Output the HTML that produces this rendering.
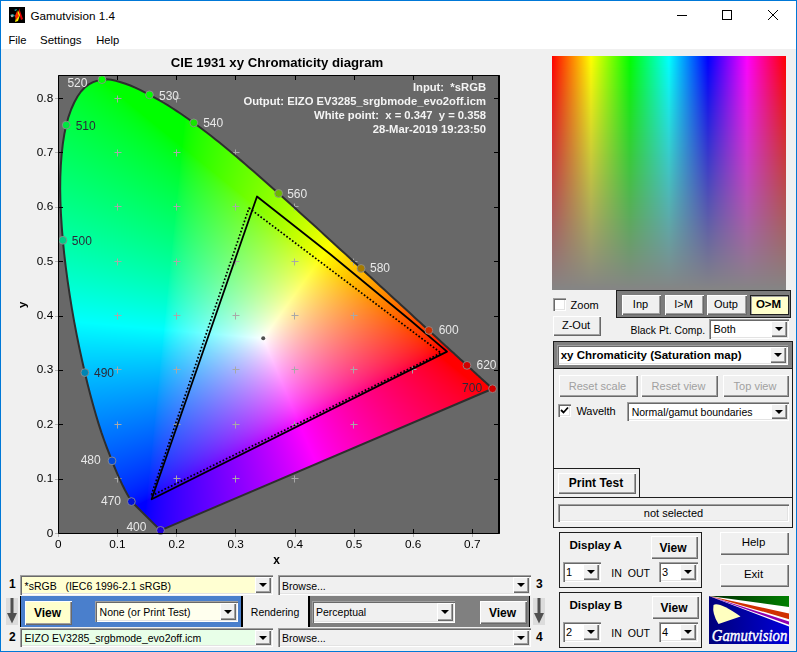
<!DOCTYPE html>
<html><head><meta charset="utf-8"><style>
html,body{margin:0;padding:0;}
body{width:797px;height:652px;overflow:hidden;background:#F0F0F0;position:relative;font-family:"Liberation Sans", sans-serif;}
div,svg,canvas{position:absolute;}
.t{white-space:pre;}
</style></head><body>
<div style="left:0px;top:0px;width:797px;height:49px;background:#fff;"></div>
<svg style="position:absolute;left:9px;top:7px" width="16" height="16" viewBox="0 0 16 16">
<rect width="16" height="16" fill="#000"/>
<path d="M10 1 L14 12 L12 13 L10 6 Z" fill="#e00000"/>
<path d="M9 3 L11 8 L9 14 L6 15 L7 11 Z" fill="#ffee00"/>
<path d="M8 4 L10 9 L7 13 L6 9 Z" fill="#ff2a00"/>
<path d="M5 3 L8 2 L7 4 Z" fill="#20c0c0"/>
<path d="M1 8 L4 7 L6 9 L3 10 Z" fill="#20a0a0"/>
<circle cx="3" cy="9" r="1.2" fill="#aaa"/>
</svg>
<div class="t" style="left:30.5px;top:9.50px;font-size:11.7px;line-height:11.7px;font-weight:normal;color:#000;">Gamutvision 1.4</div>
<div style="left:677px;top:15px;width:10px;height:1px;background:#000;"></div>
<div style="left:722px;top:10px;width:10px;height:10px;border:1px solid #000;box-sizing:border-box;"></div>
<svg style="position:absolute;left:767px;top:9px" width="12" height="12" viewBox="0 0 12 12"><path d="M1 1 L11 11 M11 1 L1 11" stroke="#000" stroke-width="1"/></svg>
<div class="t" style="left:8.5px;top:35.12px;font-size:11.2px;line-height:11.2px;font-weight:normal;color:#000;">File</div>
<div class="t" style="left:40px;top:34.87px;font-size:11.5px;line-height:11.5px;font-weight:normal;color:#000;">Settings</div>
<div class="t" style="left:96.2px;top:35.12px;font-size:11.2px;line-height:11.2px;font-weight:normal;color:#000;">Help</div>
<canvas id="plot" width="545" height="575" style="left:0;top:0;"></canvas>
<canvas id="cmap" width="234" height="234" style="left:552px;top:56px;"></canvas>
<script>(function(){const c=document.getElementById('cmap').getContext('2d');const im=c.createImageData(234,234);const d=im.data;
for(let j=0;j<234;j++){for(let i=0;i<234;i++){const h=(i+0.5)/234*6;const t=(j+0.5)/234;
 const k=Math.floor(h)%6,f=h-Math.floor(h);let r,g,b;
 switch(k){case 0:r=1;g=f;b=0;break;case 1:r=1-f;g=1;b=0;break;case 2:r=0;g=1;b=f;break;case 3:r=0;g=1-f;b=1;break;case 4:r=f;g=0;b=1;break;default:r=1;g=0;b=1-f;}
 const gr=0.52;const s=1-t;
 const o=(j*234+i)*4;d[o]=(gr+(r-gr)*s)*255;d[o+1]=(gr+(g-gr)*s)*255;d[o+2]=(gr+(b-gr)*s)*255;d[o+3]=255;}}
c.putImageData(im,0,0);})();</script>
<div style="left:553px;top:298px;width:13px;height:13px;background:#fff;box-shadow:inset 1px 1px 0 #a0a0a0, inset 2px 2px 0 #696969, inset -1px -1px 0 #fff, inset -2px -2px 0 #e3e3e3;"></div>
<div class="t" style="left:570.6px;top:299.79px;font-size:11px;line-height:11px;font-weight:normal;color:#000;">Zoom</div>
<div style="left:553px;top:316px;width:48px;height:20px;background:#F0F0F0;box-shadow:inset 1px 1px 0 #fff, inset -1px -1px 0 #696969, inset -2px -2px 0 #a0a0a0;"></div>
<div class="t" style="left:552.0px;width:48px;text-align:center;top:320.39px;font-size:11px;line-height:11px;font-weight:normal;color:#000;">Z-Out</div>
<div style="left:616px;top:290px;width:175px;height:28px;background:#7c7c7c;border:1px solid #1e1e1e;box-sizing:border-box;"></div>
<div style="left:622px;top:295px;width:39px;height:20px;background:#F0F0F0;box-shadow:inset 1px 1px 0 #fff, inset -1px -1px 0 #696969, inset -2px -2px 0 #a0a0a0;"></div>
<div class="t" style="left:621.0px;width:39px;text-align:center;top:299.49px;font-size:11px;line-height:11px;font-weight:normal;color:#000;">Inp</div>
<div style="left:665px;top:295px;width:39px;height:20px;background:#F0F0F0;box-shadow:inset 1px 1px 0 #fff, inset -1px -1px 0 #696969, inset -2px -2px 0 #a0a0a0;"></div>
<div class="t" style="left:664.0px;width:39px;text-align:center;top:299.49px;font-size:11px;line-height:11px;font-weight:normal;color:#000;">I&gt;M</div>
<div style="left:707px;top:295px;width:40px;height:20px;background:#F0F0F0;box-shadow:inset 1px 1px 0 #fff, inset -1px -1px 0 #696969, inset -2px -2px 0 #a0a0a0;"></div>
<div class="t" style="left:706.0px;width:40px;text-align:center;top:299.49px;font-size:11px;line-height:11px;font-weight:normal;color:#000;">Outp</div>
<div style="left:750px;top:295px;width:39px;height:20px;background:#FFFFCC;border:1px solid #202020;box-sizing:border-box;box-shadow:inset 1px 1px 0 #a0a0a0;"></div>
<div class="t" style="left:749.0px;width:39px;text-align:center;top:299.07px;font-size:11.5px;line-height:11.5px;font-weight:bold;color:#000;">O&gt;M</div>
<div class="t" style="left:630.6px;top:325.50px;font-size:10.4px;line-height:10.4px;font-weight:normal;color:#000;">Black Pt. Comp.</div>
<div style="left:709px;top:319px;width:80px;height:20px;background:#fff;box-shadow:inset 1px 1px 0 #a0a0a0, inset 2px 2px 0 #696969, inset -1px -1px 0 #fff, inset -2px -2px 0 #e3e3e3;"></div>
<div style="left:771px;top:321px;width:16px;height:16px;background:#F0F0F0;box-shadow:inset 1px 1px 0 #fff, inset -1px -1px 0 #696969, inset -2px -2px 0 #a0a0a0;"></div>
<div style="left:775.0px;top:327.0px;width:0;height:0;border-left:4px solid transparent;border-right:4px solid transparent;border-top:4px solid #000;"></div>
<div class="t" style="left:713.5px;top:324.46px;font-size:10.8px;line-height:10.8px;font-weight:normal;color:#000;">Both</div>
<div style="left:553px;top:341px;width:240px;height:28px;background:#808080;border:1px solid #1e1e1e;box-sizing:border-box;"></div>
<div style="left:557px;top:345px;width:231px;height:20px;background:#fff;box-shadow:inset 1px 1px 0 #a0a0a0, inset 2px 2px 0 #696969, inset -1px -1px 0 #fff, inset -2px -2px 0 #e3e3e3;"></div>
<div style="left:770px;top:347px;width:16px;height:16px;background:#F0F0F0;box-shadow:inset 1px 1px 0 #fff, inset -1px -1px 0 #696969, inset -2px -2px 0 #a0a0a0;"></div>
<div style="left:774.0px;top:353.0px;width:0;height:0;border-left:4px solid transparent;border-right:4px solid transparent;border-top:4px solid #000;"></div>
<div class="t" style="left:560.7px;top:350.07px;font-size:11.5px;line-height:11.5px;font-weight:bold;color:#000;">xy Chromaticity (Saturation map)</div>
<div style="left:553px;top:368px;width:240px;height:160px;border:1px solid #1e1e1e;box-sizing:border-box;"></div>
<div style="left:559px;top:375px;width:79px;height:22px;background:#F0F0F0;box-shadow:inset 1px 1px 0 #fff, inset -1px -1px 0 #696969, inset -2px -2px 0 #a0a0a0;"></div>
<div class="t" style="left:558.0px;width:79px;text-align:center;top:380.69px;font-size:11px;line-height:11px;font-weight:normal;color:#a0a0a0;">Reset scale</div>
<div style="left:641px;top:375px;width:77px;height:22px;background:#F0F0F0;box-shadow:inset 1px 1px 0 #fff, inset -1px -1px 0 #696969, inset -2px -2px 0 #a0a0a0;"></div>
<div class="t" style="left:640.0px;width:77px;text-align:center;top:380.69px;font-size:11px;line-height:11px;font-weight:normal;color:#a0a0a0;">Reset view</div>
<div style="left:723px;top:375px;width:66px;height:22px;background:#F0F0F0;box-shadow:inset 1px 1px 0 #fff, inset -1px -1px 0 #696969, inset -2px -2px 0 #a0a0a0;"></div>
<div class="t" style="left:722.0px;width:66px;text-align:center;top:380.69px;font-size:11px;line-height:11px;font-weight:normal;color:#a0a0a0;">Top view</div>
<div style="left:558px;top:404px;width:13px;height:13px;background:#fff;box-shadow:inset 1px 1px 0 #a0a0a0, inset 2px 2px 0 #696969, inset -1px -1px 0 #fff, inset -2px -2px 0 #e3e3e3;"></div>
<svg style="position:absolute;left:560px;top:406px" width="9" height="9" viewBox="0 0 9 9"><path d="M1 4 L3.5 6.5 L8 1.5" stroke="#000" stroke-width="1.8" fill="none"/></svg>
<div class="t" style="left:576.4px;top:405.69px;font-size:11px;line-height:11px;font-weight:normal;color:#000;">Wavelth</div>
<div style="left:627px;top:402px;width:162px;height:19px;background:#fff;box-shadow:inset 1px 1px 0 #a0a0a0, inset 2px 2px 0 #696969, inset -1px -1px 0 #fff, inset -2px -2px 0 #e3e3e3;"></div>
<div style="left:771px;top:404px;width:16px;height:15px;background:#F0F0F0;box-shadow:inset 1px 1px 0 #fff, inset -1px -1px 0 #696969, inset -2px -2px 0 #a0a0a0;"></div>
<div style="left:775.0px;top:409.5px;width:0;height:0;border-left:4px solid transparent;border-right:4px solid transparent;border-top:4px solid #000;"></div>
<div class="t" style="left:631.7px;top:407.11px;font-size:10.5px;line-height:10.5px;font-weight:normal;color:#000;">Normal/gamut boundaries</div>
<div style="left:553px;top:468px;width:87px;height:30px;border:1px solid #1e1e1e;border-bottom:none;box-sizing:border-box;"></div>
<div style="left:553px;top:497px;width:240px;height:1px;background:#1e1e1e;"></div>
<div style="left:558px;top:473px;width:78px;height:21px;background:#F0F0F0;box-shadow:inset 1px 1px 0 #fff, inset -1px -1px 0 #696969, inset -2px -2px 0 #a0a0a0;"></div>
<div class="t" style="left:557.0px;width:78px;text-align:center;top:477.44px;font-size:12px;line-height:12px;font-weight:bold;color:#000;">Print Test</div>
<div style="left:558px;top:504px;width:231px;height:18px;background:#F0F0F0;box-shadow:inset 1px 1px 0 #a0a0a0, inset 2px 2px 0 #696969, inset -1px -1px 0 #fff, inset -2px -2px 0 #e3e3e3;"></div>
<div class="t" style="left:573.5px;width:200px;text-align:center;top:508.19px;font-size:11px;line-height:11px;font-weight:normal;color:#000;">not selected</div>
<div style="left:559px;top:532px;width:143px;height:56px;border:1px solid #1e1e1e;box-sizing:border-box;"></div>
<div class="t" style="left:569.5px;top:539.18px;font-size:11.6px;line-height:11.6px;font-weight:bold;color:#000;">Display A</div>
<div style="left:650.5px;top:536px;width:47px;height:23px;background:#F0F0F0;box-shadow:inset 1px 1px 0 #fff, inset -1px -1px 0 #696969, inset -2px -2px 0 #a0a0a0;"></div>
<div class="t" style="left:649.5px;width:47px;text-align:center;top:541.84px;font-size:12px;line-height:12px;font-weight:bold;color:#000;">View</div>
<div style="left:563px;top:562px;width:38px;height:20px;background:#fff;box-shadow:inset 1px 1px 0 #a0a0a0, inset 2px 2px 0 #696969, inset -1px -1px 0 #fff, inset -2px -2px 0 #e3e3e3;"></div>
<div style="left:583px;top:564px;width:16px;height:16px;background:#F0F0F0;box-shadow:inset 1px 1px 0 #fff, inset -1px -1px 0 #696969, inset -2px -2px 0 #a0a0a0;"></div>
<div style="left:587.0px;top:570.0px;width:0;height:0;border-left:4px solid transparent;border-right:4px solid transparent;border-top:4px solid #000;"></div>
<div class="t" style="left:566px;top:567.29px;font-size:11px;line-height:11px;font-weight:normal;color:#000;">1</div>
<div class="t" style="left:611.2px;top:567.53px;font-size:10.6px;line-height:10.6px;font-weight:normal;color:#000;">IN  OUT</div>
<div style="left:659px;top:562px;width:39px;height:20px;background:#fff;box-shadow:inset 1px 1px 0 #a0a0a0, inset 2px 2px 0 #696969, inset -1px -1px 0 #fff, inset -2px -2px 0 #e3e3e3;"></div>
<div style="left:680px;top:564px;width:16px;height:16px;background:#F0F0F0;box-shadow:inset 1px 1px 0 #fff, inset -1px -1px 0 #696969, inset -2px -2px 0 #a0a0a0;"></div>
<div style="left:684.0px;top:570.0px;width:0;height:0;border-left:4px solid transparent;border-right:4px solid transparent;border-top:4px solid #000;"></div>
<div class="t" style="left:662px;top:567.29px;font-size:11px;line-height:11px;font-weight:normal;color:#000;">3</div>
<div style="left:559px;top:592px;width:143px;height:56px;border:1px solid #1e1e1e;box-sizing:border-box;"></div>
<div class="t" style="left:569.5px;top:599.18px;font-size:11.6px;line-height:11.6px;font-weight:bold;color:#000;">Display B</div>
<div style="left:651.5px;top:596px;width:47px;height:23px;background:#F0F0F0;box-shadow:inset 1px 1px 0 #fff, inset -1px -1px 0 #696969, inset -2px -2px 0 #a0a0a0;"></div>
<div class="t" style="left:650.5px;width:47px;text-align:center;top:601.84px;font-size:12px;line-height:12px;font-weight:bold;color:#000;">View</div>
<div style="left:563px;top:622px;width:38px;height:20px;background:#fff;box-shadow:inset 1px 1px 0 #a0a0a0, inset 2px 2px 0 #696969, inset -1px -1px 0 #fff, inset -2px -2px 0 #e3e3e3;"></div>
<div style="left:583px;top:624px;width:16px;height:16px;background:#F0F0F0;box-shadow:inset 1px 1px 0 #fff, inset -1px -1px 0 #696969, inset -2px -2px 0 #a0a0a0;"></div>
<div style="left:587.0px;top:630.0px;width:0;height:0;border-left:4px solid transparent;border-right:4px solid transparent;border-top:4px solid #000;"></div>
<div class="t" style="left:566px;top:627.29px;font-size:11px;line-height:11px;font-weight:normal;color:#000;">2</div>
<div class="t" style="left:611.2px;top:627.53px;font-size:10.6px;line-height:10.6px;font-weight:normal;color:#000;">IN  OUT</div>
<div style="left:659px;top:622px;width:39px;height:20px;background:#fff;box-shadow:inset 1px 1px 0 #a0a0a0, inset 2px 2px 0 #696969, inset -1px -1px 0 #fff, inset -2px -2px 0 #e3e3e3;"></div>
<div style="left:680px;top:624px;width:16px;height:16px;background:#F0F0F0;box-shadow:inset 1px 1px 0 #fff, inset -1px -1px 0 #696969, inset -2px -2px 0 #a0a0a0;"></div>
<div style="left:684.0px;top:630.0px;width:0;height:0;border-left:4px solid transparent;border-right:4px solid transparent;border-top:4px solid #000;"></div>
<div class="t" style="left:662px;top:627.29px;font-size:11px;line-height:11px;font-weight:normal;color:#000;">4</div>
<div style="left:720px;top:532px;width:69px;height:23px;background:#F0F0F0;box-shadow:inset 1px 1px 0 #fff, inset -1px -1px 0 #696969, inset -2px -2px 0 #a0a0a0;"></div>
<div class="t" style="left:719.0px;width:69px;text-align:center;top:537.07px;font-size:11.5px;line-height:11.5px;font-weight:normal;color:#000;">Help</div>
<div style="left:720px;top:564px;width:69px;height:23px;background:#F0F0F0;box-shadow:inset 1px 1px 0 #fff, inset -1px -1px 0 #696969, inset -2px -2px 0 #a0a0a0;"></div>
<div class="t" style="left:719.0px;width:69px;text-align:center;top:569.27px;font-size:11.5px;line-height:11.5px;font-weight:normal;color:#000;">Exit</div>
<svg style="position:absolute;left:709px;top:596px" width="80" height="48" viewBox="0 0 80 48">
<defs><linearGradient id="lb" x1="0" x2="1"><stop offset="0" stop-color="#00007a"/><stop offset="1" stop-color="#0000d8"/></linearGradient>
<linearGradient id="lg" x1="0" x2="1"><stop offset="0" stop-color="#002800"/><stop offset="1" stop-color="#008000"/></linearGradient></defs>
<rect width="80" height="48" fill="url(#lb)"/>
<path d="M0 0 L80 0 L80 30.5 Z" fill="#fff"/>
<path d="M0 0 L80 0 L80 11 Z" fill="url(#lg)"/>
<path d="M0 0 L80 17.5 L80 23.2 Z" fill="#d03000"/>
<path d="M0 0 L80 25.4 L80 28.7 Z" fill="#9000b0"/>
<path d="M4.5 9 Q10 5.5 31.5 20.5 L9.5 28 Q3 18 4.5 9 Z" fill="#ffffc0"/>
<text x="2.8" y="44.6" font-family="Liberation Serif" font-style="italic" font-size="17.5" fill="#fff" stroke="#fff" stroke-width="0.45" textLength="75.5" lengthAdjust="spacingAndGlyphs">Gamutvision</text>
</svg>
<div class="t" style="left:9px;top:578.44px;font-size:12px;line-height:12px;font-weight:bold;color:#000;">1</div>
<div class="t" style="left:9px;top:630.94px;font-size:12px;line-height:12px;font-weight:bold;color:#000;">2</div>
<div style="left:20px;top:575px;width:253px;height:20px;background:#FFFFD2;box-shadow:inset 1px 1px 0 #a0a0a0, inset 2px 2px 0 #696969, inset -1px -1px 0 #fff, inset -2px -2px 0 #e3e3e3;"></div>
<div style="left:255px;top:577px;width:16px;height:16px;background:#F0F0F0;box-shadow:inset 1px 1px 0 #fff, inset -1px -1px 0 #696969, inset -2px -2px 0 #a0a0a0;"></div>
<div style="left:259.0px;top:583.0px;width:0;height:0;border-left:4px solid transparent;border-right:4px solid transparent;border-top:4px solid #000;"></div>
<div class="t" style="left:24.6px;top:580.61px;font-size:10.5px;line-height:10.5px;font-weight:normal;color:#000;">*sRGB   (IEC6 1996-2.1 sRGB)</div>
<div style="left:20px;top:628px;width:253px;height:19px;background:#E8FFE8;box-shadow:inset 1px 1px 0 #a0a0a0, inset 2px 2px 0 #696969, inset -1px -1px 0 #fff, inset -2px -2px 0 #e3e3e3;"></div>
<div style="left:255px;top:630px;width:16px;height:15px;background:#F0F0F0;box-shadow:inset 1px 1px 0 #fff, inset -1px -1px 0 #696969, inset -2px -2px 0 #a0a0a0;"></div>
<div style="left:259.0px;top:635.5px;width:0;height:0;border-left:4px solid transparent;border-right:4px solid transparent;border-top:4px solid #000;"></div>
<div class="t" style="left:24.6px;top:633.41px;font-size:10.5px;line-height:10.5px;font-weight:normal;color:#000;">EIZO EV3285_srgbmode_evo2off.icm</div>
<div style="left:278px;top:575px;width:253px;height:20px;background:#F0F0F0;box-shadow:inset 1px 1px 0 #a0a0a0, inset 2px 2px 0 #696969, inset -1px -1px 0 #fff, inset -2px -2px 0 #e3e3e3;"></div>
<div style="left:513px;top:577px;width:16px;height:16px;background:#F0F0F0;box-shadow:inset 1px 1px 0 #fff, inset -1px -1px 0 #696969, inset -2px -2px 0 #a0a0a0;"></div>
<div style="left:517.0px;top:583.0px;width:0;height:0;border-left:4px solid transparent;border-right:4px solid transparent;border-top:4px solid #000;"></div>
<div class="t" style="left:282px;top:580.61px;font-size:10.5px;line-height:10.5px;font-weight:normal;color:#000;">Browse...</div>
<div style="left:278px;top:628px;width:253px;height:19px;background:#F0F0F0;box-shadow:inset 1px 1px 0 #a0a0a0, inset 2px 2px 0 #696969, inset -1px -1px 0 #fff, inset -2px -2px 0 #e3e3e3;"></div>
<div style="left:513px;top:630px;width:16px;height:15px;background:#F0F0F0;box-shadow:inset 1px 1px 0 #fff, inset -1px -1px 0 #696969, inset -2px -2px 0 #a0a0a0;"></div>
<div style="left:517.0px;top:635.5px;width:0;height:0;border-left:4px solid transparent;border-right:4px solid transparent;border-top:4px solid #000;"></div>
<div class="t" style="left:282px;top:633.41px;font-size:10.5px;line-height:10.5px;font-weight:normal;color:#000;">Browse...</div>
<div class="t" style="left:536px;top:578.24px;font-size:12px;line-height:12px;font-weight:bold;color:#000;">3</div>
<div class="t" style="left:536px;top:630.94px;font-size:12px;line-height:12px;font-weight:bold;color:#000;">4</div>
<div style="left:20px;top:596px;width:223px;height:31px;background:#4a7fcc;border-left:1px solid #000;border-right:2px solid #000;box-sizing:border-box;"></div>
<div style="left:25px;top:601px;width:47px;height:24px;background:#FFFFCC;box-shadow:inset 1px 1px 0 #fff, inset -1px -1px 0 #696969, inset -2px -2px 0 #a0a0a0;"></div>
<div class="t" style="left:24.0px;width:47px;text-align:center;top:607.34px;font-size:12px;line-height:12px;font-weight:bold;color:#000;">View</div>
<div style="left:95px;top:601px;width:143px;height:21px;background:#FFFFEE;box-shadow:inset 1px 1px 0 #a0a0a0, inset 2px 2px 0 #696969, inset -1px -1px 0 #fff, inset -2px -2px 0 #e3e3e3;"></div>
<div style="left:220px;top:603px;width:16px;height:17px;background:#F0F0F0;box-shadow:inset 1px 1px 0 #fff, inset -1px -1px 0 #696969, inset -2px -2px 0 #a0a0a0;"></div>
<div style="left:224.0px;top:609.5px;width:0;height:0;border-left:4px solid transparent;border-right:4px solid transparent;border-top:4px solid #000;"></div>
<div class="t" style="left:99.6px;top:606.91px;font-size:10.5px;line-height:10.5px;font-weight:normal;color:#000;">None (or Print Test)</div>
<div class="t" style="left:250.8px;top:607.01px;font-size:10.5px;line-height:10.5px;font-weight:normal;color:#000;">Rendering</div>
<div style="left:308px;top:596px;width:222px;height:31px;background:#808080;border-left:2px solid #000;border-right:1px solid #000;box-sizing:border-box;"></div>
<div style="left:312px;top:601px;width:143px;height:22px;background:#F0F0F0;box-shadow:inset 1px 1px 0 #a0a0a0, inset 2px 2px 0 #696969, inset -1px -1px 0 #fff, inset -2px -2px 0 #e3e3e3;"></div>
<div style="left:437px;top:603px;width:16px;height:18px;background:#F0F0F0;box-shadow:inset 1px 1px 0 #fff, inset -1px -1px 0 #696969, inset -2px -2px 0 #a0a0a0;"></div>
<div style="left:441.0px;top:610.0px;width:0;height:0;border-left:4px solid transparent;border-right:4px solid transparent;border-top:4px solid #000;"></div>
<div class="t" style="left:316px;top:607.11px;font-size:10.5px;line-height:10.5px;font-weight:normal;color:#000;">Perceptual</div>
<div style="left:480px;top:601px;width:47px;height:23px;background:#F0F0F0;box-shadow:inset 1px 1px 0 #fff, inset -1px -1px 0 #696969, inset -2px -2px 0 #a0a0a0;"></div>
<div class="t" style="left:479.0px;width:47px;text-align:center;top:606.84px;font-size:12px;line-height:12px;font-weight:bold;color:#000;">View</div>
<div style="left:6px;top:598px;width:12px;height:27px;background:#dcdcdc;"></div>
<svg style="position:absolute;left:6px;top:598px" width="12" height="27" viewBox="0 0 12 27"><path d="M6 0 V20" stroke="#505050" stroke-width="3"/><path d="M1 15 L6 25.5 L11 15 Z" fill="#505050"/></svg>
<div style="left:533px;top:598px;width:12px;height:27px;background:#dcdcdc;"></div>
<svg style="position:absolute;left:533px;top:598px" width="12" height="27" viewBox="0 0 12 27"><path d="M6 0 V20" stroke="#505050" stroke-width="3"/><path d="M1 15 L6 25.5 L11 15 Z" fill="#505050"/></svg>
<div style="left:0px;top:0px;width:797px;height:652px;box-sizing:border-box;border:1px solid #0078d7;"></div>
<script>
(function(){
const cv=document.getElementById('plot');
const ctx=cv.getContext('2d');
const X0=58, Y0=533, SX=591.43, SY=543.75;
const L=[[380,0.1741,0.0050],[385,0.1740,0.0050],[390,0.1738,0.0049],[395,0.1736,0.0049],[400,0.1733,0.0048],[405,0.1730,0.0048],[410,0.1726,0.0048],[415,0.1721,0.0048],[420,0.1714,0.0051],[425,0.1703,0.0058],[430,0.1689,0.0069],[435,0.1669,0.0086],[440,0.1644,0.0109],[445,0.1611,0.0138],[450,0.1566,0.0177],[455,0.1510,0.0227],[460,0.1440,0.0297],[465,0.1355,0.0399],[470,0.1241,0.0578],[475,0.1096,0.0868],[480,0.0913,0.1327],[485,0.0687,0.2007],[490,0.0454,0.2950],[495,0.0235,0.4127],[500,0.0082,0.5384],[505,0.0039,0.6548],[510,0.0139,0.7502],[515,0.0389,0.8120],[520,0.0743,0.8338],[525,0.1142,0.8262],[530,0.1547,0.8059],[535,0.1929,0.7816],[540,0.2296,0.7543],[545,0.2658,0.7243],[550,0.3016,0.6923],[555,0.3373,0.6589],[560,0.3731,0.6245],[565,0.4087,0.5896],[570,0.4441,0.5547],[575,0.4788,0.5202],[580,0.5125,0.4866],[585,0.5448,0.4544],[590,0.5752,0.4242],[595,0.6029,0.3965],[600,0.6270,0.3725],[605,0.6482,0.3514],[610,0.6658,0.3340],[615,0.6801,0.3197],[620,0.6915,0.3083],[625,0.7006,0.2993],[630,0.7079,0.2920],[635,0.7140,0.2859],[640,0.7190,0.2809],[645,0.7230,0.2770],[650,0.7260,0.2740],[655,0.7283,0.2717],[660,0.7300,0.2700],[665,0.7311,0.2689],[670,0.7320,0.2680],[675,0.7327,0.2673],[680,0.7334,0.2666],[685,0.7340,0.2660],[690,0.7344,0.2656],[695,0.7346,0.2654],[700,0.7347,0.2653]];
function px(x){return X0+x*SX;}
function py(y){return Y0-y*SY;}
const W=cv.width,H=cv.height;
// --- plot background
ctx.fillStyle='#686868';
ctx.fillRect(58,75,442,459);
// --- smooth locus (Catmull-Rom at 1nm)
const P=[[0.1733,0.0048]];
const base=L.filter(p=>p[0]>=470);
for(let i=0;i<base.length-1;i++){
  const p0=base[Math.max(0,i-1)],p1=base[i],p2=base[i+1],p3=base[Math.min(base.length-1,i+2)];
  for(let t=0;t<5;t++){const u=t/5,u2=u*u,u3=u2*u;
    const f=(a,b,c,d)=>0.5*((2*b)+(-a+c)*u+(2*a-5*b+4*c-d)*u2+(-a+3*b-3*c+d)*u3);
    P.push([f(p0[1],p1[1],p2[1],p3[1]),f(p0[2],p1[2],p2[2],p3[2])]);}
}
P.push([base[base.length-1][1],base[base.length-1][2]]);
const PP=P.map(p=>[px(p[0]),py(p[1])]);
window.__PP=PP;
const m=document.createElement('canvas');m.width=W;m.height=H;
const mc=m.getContext('2d');
mc.beginPath();
PP.forEach((p,i)=>{if(i==0)mc.moveTo(p[0],p[1]); else mc.lineTo(p[0],p[1]);});
mc.closePath();mc.fillStyle='#000';mc.fill();
const md=mc.getImageData(0,0,W,H).data;
const img=ctx.getImageData(0,0,W,H);const d=img.data;
const WX=0.347, WY=0.358;
const WPX=px(WX), WPY=py(WY);
function lin(X,Y,Z){return [3.2406*X-1.5372*Y-0.4986*Z, -0.9689*X+1.8758*Y+0.0415*Z, 0.0557*X-0.2040*Y+1.0570*Z];}
const wr=lin(WX/WY,1,(1-WX-WY)/WY);
function gam(v){return v<=0.0031308?12.92*v:1.055*Math.pow(v,1/2.4)-0.055;}
const GM=window.__GM||0.65;
function linA(X,Y,Z){return [2.0413690*X-0.5649464*Y-0.3446944*Z, -0.9692660*X+1.8760108*Y+0.0415560*Z, 0.0134474*X-0.1183897*Y+1.0154096*Z];}
const wa=linA(WX/WY,1,(1-WX-WY)/WY);
for(let j=70;j<540;j++){for(let i=55;i<505;i++){
  const k=(j*W+i)*4; const a=md[k+3]; if(!a)continue;
  const x=(i+0.5-X0)/SX, y=(Y0-(j+0.5))/SY;
  if(y<=0.001)continue;
  let r=linA(x/y,1,(1-x-y)/y);
  r=[r[0]/wa[0],r[1]/wa[1],r[2]/wa[2]];
  r=r.map(v=>Math.max(0,v));
  const mx=Math.max(r[0],r[1],r[2]);
  const out=r.map(v=>Math.pow(v/mx,GM)*255);
  const ff=a/255;
  d[k]=d[k]*(1-ff)+out[0]*ff; d[k+1]=d[k+1]*(1-ff)+out[1]*ff; d[k+2]=d[k+2]*(1-ff)+out[2]*ff;
}}
ctx.putImageData(img,0,0);
// --- crosses
ctx.strokeStyle='#a8a8a8';ctx.lineWidth=1;
const CR={8:[1,2],7:[1,2,3],6:[1,2,3,4],5:[1,2,3,4,5],4:[1,2,3,4,5],3:[1,2,3,4,5,6],2:[1,2,3,4,5],1:[1,2,3,4]};
for(const yy in CR){for(const xx of CR[yy]){
  const cx=Math.floor(px(xx/10))+0.5, cy=Math.floor(py(yy/10))+0.5;
  ctx.beginPath();ctx.moveTo(cx-3,cy);ctx.lineTo(cx+4,cy);ctx.moveTo(cx,cy-3);ctx.lineTo(cx,cy+4);ctx.stroke();
}}
// --- locus line
ctx.strokeStyle='#2e2e2e';ctx.lineWidth=2;ctx.lineJoin='round';
ctx.beginPath();
PP.forEach((p,i)=>{if(i==0)ctx.moveTo(p[0],p[1]); else ctx.lineTo(p[0],p[1]);});
ctx.closePath();ctx.stroke();
// --- gamut triangles
ctx.strokeStyle='#000';ctx.lineWidth=1.8;ctx.setLineDash([]);
ctx.beginPath();ctx.moveTo(257,196.5);ctx.lineTo(330,254);ctx.lineTo(410,320);ctx.lineTo(447,351.6);ctx.lineTo(151.6,499.2);ctx.closePath();ctx.stroke();
ctx.lineWidth=1.7;ctx.setLineDash([1.7,1.9]);
ctx.beginPath();ctx.moveTo(249,208);ctx.lineTo(441,353);ctx.lineTo(151,496);ctx.closePath();ctx.stroke();
ctx.setLineDash([]);
// white point
ctx.fillStyle='#505050';ctx.beginPath();ctx.arc(px(0.347),py(0.358),2.0,0,7);ctx.fill();
// --- dots
const DOTW=[400,470,480,490,500,510,520,530,540,560,580,600,620,700];
const DK={400:0.85,470:0.85,480:0.85,490:0.7,500:0.8,510:0.9,520:1.0,530:1.0,540:0.9,560:0.72,580:0.65,600:0.8,620:0.82,700:0.82};
for(const p of L){ if(DOTW.includes(p[0])){
  let r=linA(p[1]/p[2],1,(1-p[1]-p[2])/p[2]); r=[r[0]/wa[0],r[1]/wa[1],r[2]/wa[2]].map(v=>Math.max(0,v));
  const mx=Math.max(...r); const c=r.map(v=>Math.round(Math.pow(v/mx,GM)*255*DK[p[0]]));
  ctx.beginPath();ctx.arc(px(p[1]),py(p[2]),3.9,0,7);ctx.fillStyle='rgb('+c.join(',')+')';ctx.fill();
  ctx.strokeStyle='rgba(140,140,140,0.9)';ctx.lineWidth=1;ctx.stroke();
}}
// --- frame and ticks
ctx.strokeStyle='#000';ctx.lineWidth=1;
ctx.strokeRect(58.5,75.5,441,458);ctx.beginPath();ctx.moveTo(498.5,76);ctx.lineTo(498.5,533);ctx.stroke();
ctx.beginPath();
for(let i=1;i<=7;i++){const x=Math.round(px(i/10))+0.5; ctx.moveTo(x,76);ctx.lineTo(x,80);ctx.moveTo(x,533);ctx.lineTo(x,529);}
for(let i=1;i<=8;i++){const y=Math.round(py(i/10))+0.5; ctx.moveTo(59,y);ctx.lineTo(63,y);ctx.moveTo(498,y);ctx.lineTo(494,y);}
ctx.stroke();
ctx.strokeStyle='#b4b4b4';ctx.beginPath();
for(let i=0;i<=8;i++){const y=Math.round(py(i/10))+0.5; ctx.moveTo(55,y);ctx.lineTo(58,y);}
for(let i=0;i<=7;i++){const x=Math.round(px(i/10))+0.5; ctx.moveTo(x,534);ctx.lineTo(x,537);}
ctx.stroke();
// --- text
ctx.textBaseline='alphabetic';
function T(s,x,y,font,color,align){ctx.font=font;ctx.fillStyle=color;ctx.textAlign=align||'left';ctx.fillText(s,x,y);}
T('CIE 1931 xy Chromaticity diagram',277,66.6,'bold 13.2px "Liberation Sans"','#000','center');
for(let i=0;i<=8;i++){T(i==0?'0':(i/10).toFixed(1),53.2,py(i/10)+3.6,'11.8px "Liberation Sans"','#000','right');}
for(let i=0;i<=7;i++){T(i==0?'0':(i/10).toFixed(1),px(i/10)+0.3,548.2,'11.8px "Liberation Sans"','#000','center');}
T('x',276.6,564,'bold 12px "Liberation Sans"','#000','center');
ctx.save();ctx.translate(26.3,304.7);ctx.rotate(-Math.PI/2);T('y',0,0,'bold 11.5px "Liberation Sans"','#000','center');ctx.restore();
const LBL=[['520',67.4,83.3,1],['530',159,96.2,1],['510',75.7,125.8,0],['540',203.2,123.6,1],['500',71.8,240.6,0],['560',287.2,194.8,1],['580',370,268.8,1],['600',438.7,330.7,1],['620',476.5,365.6,1],['700',462.1,387.6,0],['490',94,372.7,0],['480',80.7,460.6,1],['470',101,501.7,1],['400',126.4,527,1]];
for(const l of LBL){T(l[0],l[1],l[2]+(l[3]?3.6:4.6),'12px "Liberation Sans"',l[3]?'#e8e8e8':'#2a2a3a','left');}
const INFO=['Input:  *sRGB','Output: EIZO EV3285_srgbmode_evo2off.icm','White point:  x = 0.347  y = 0.358','28-Mar-2019 19:23:50'];
INFO.forEach((s,i)=>T(s,486,91+i*13.9,'bold 11.25px "Liberation Sans"','#f4f4f4','right'));
})();
</script>
</body></html>
